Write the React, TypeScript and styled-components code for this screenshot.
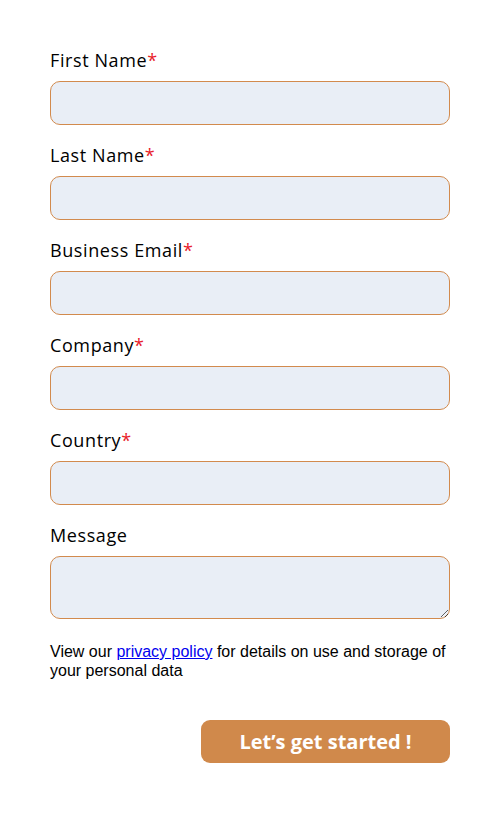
import React from "react";
import styled, { createGlobalStyle } from "styled-components";

const Global = createGlobalStyle`
  html, body { margin: 0; padding: 0; background: #ffffff; }
  * { box-sizing: border-box; }
`;

const Form = styled.form`
  width: 500px;
  padding: 47px 50px 40px 50px;
  display: flex;
  flex-direction: column;
`;

const Field = styled.div`
  display: flex;
  flex-direction: column;
  margin-bottom: 17px;
`;

const Label = styled.label`
  font-family: "Open Sans", "Noto Sans", sans-serif;
  font-size: 18px;
  line-height: 27px;
  color: #000000;
  margin-bottom: 7px;
  letter-spacing: 0.6px;
`;

const Star = styled.span`
  color: #e8202a;
`;

const Input = styled.input`
  display: block;
  width: 100%;
  height: 44px;
  border: 1px solid #d28a4d;
  border-radius: 10px;
  background: #e9eef6;
  outline: none;
  padding: 0 12px;
  font-size: 16px;
`;

const TextArea = styled.textarea`
  display: block;
  width: 100%;
  height: 63px;
  border: 1px solid #d28a4d;
  border-radius: 10px;
  background: #e9eef6;
  outline: none;
  padding: 8px 12px;
  font-size: 16px;
  resize: vertical;
`;

const Note = styled.p`
  margin: 6px 0 0 0;
  font-family: "Liberation Sans", Arial, sans-serif;
  font-size: 16px;
  line-height: 19px;
  color: #000000;
`;

const Link = styled.a`
  color: #0000ee;
  text-decoration: underline;
`;

const Actions = styled.div`
  display: flex;
  justify-content: flex-end;
  margin-top: 40px;
`;

const Button = styled.button`
  width: 249px;
  height: 43px;
  border: none;
  border-radius: 9px;
  background: #d0894b;
  color: #ffffff;
  font-family: "Open Sans", "Noto Sans", sans-serif;
  font-weight: 700;
  font-size: 20px;
  letter-spacing: 0;
  cursor: pointer;
`;

const fields: { label: string; required: boolean }[] = [
  { label: "First Name", required: true },
  { label: "Last Name", required: true },
  { label: "Business Email", required: true },
  { label: "Company", required: true },
  { label: "Country", required: true },
];

export default function App() {
  return (
    <>
      <Global />
      <Form onSubmit={(e) => e.preventDefault()}>
        {fields.map((f) => (
          <Field key={f.label}>
            <Label>
              {f.label}
              {f.required && <Star>*</Star>}
            </Label>
            <Input type="text" />
          </Field>
        ))}
        <Field>
          <Label>Message</Label>
          <TextArea />
        </Field>
        <Note>
          View our <Link href="#">privacy policy</Link> for details on use and storage of your personal data
        </Note>
        <Actions>
          <Button type="submit">Let’s get started !</Button>
        </Actions>
      </Form>
    </>
  );
}
